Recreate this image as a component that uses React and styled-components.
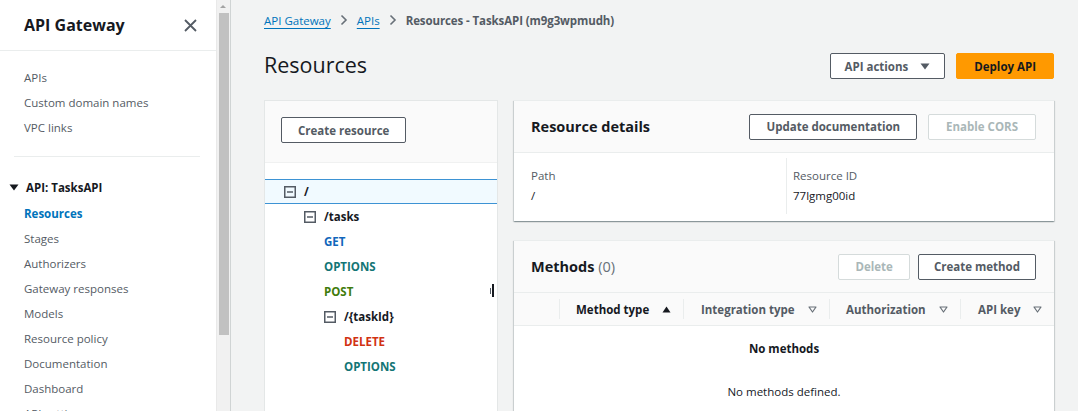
import React from "react";
import styled, { createGlobalStyle } from "styled-components";

const Global = createGlobalStyle`
  html, body { margin: 0; padding: 0; }
  body {
    font-family: "Open Sans", "Noto Sans", Arial, sans-serif;
    font-size: 11.5px;
    color: #16191f;
    background: #f2f3f3;
    overflow: hidden;
  }
  * { box-sizing: border-box; }
`;

const Shell = styled.div`
  display: flex;
  height: 411px;
  width: 1078px;
  overflow: hidden;
`;

/* ---------- Sidebar ---------- */
const SidebarFrame = styled.div`
  display: flex;
  flex: none;
  height: 411px;
  border-right: 1px solid #d0d4d4;
`;

const Sidebar = styled.nav`
  width: 216px;
  height: 411px;
  background: #fff;
  overflow: hidden;
`;

const ScrollTrack = styled.div`
  position: relative;
  width: 14px;
  height: 411px;
  background: #f1f1f1;
  border-left: 1px solid #e9e9e9;
`;

const ScrollArrow = styled.span`
  position: absolute;
  top: 5px;
  left: 3px;
  width: 0;
  height: 0;
  border-left: 3.5px solid transparent;
  border-right: 3.5px solid transparent;
  border-bottom: 3.5px solid #a3a3a3;
`;

const ScrollThumb = styled.div`
  position: absolute;
  top: 13px;
  left: 2px;
  width: 10px;
  height: 322px;
  background: #c1c1c1;
`;

const SideHeader = styled.div`
  height: 51px;
  padding: 0 19px 0 24px;
  display: flex;
  align-items: center;
  justify-content: space-between;
  border-bottom: 1px solid #eaeded;
`;

const SideTitle = styled.div`
  font-size: 16px;
  font-weight: 700;
  color: #16191f;
`;

const CloseBtn = styled.span`
  display: flex;
  color: #545b64;
`;

const NavGroup = styled.ul`
  list-style: none;
  margin: 0;
  padding: ${(p) => (p.$top ? "14px 0 16px" : "1px 0 0")};
`;

const NavItem = styled.li`
  height: 25px;
  line-height: 25px;
  padding-left: 24px;
  white-space: nowrap;
  color: ${(p) => (p.$active ? "#0073bb" : "#545b64")};
  font-weight: ${(p) => (p.$active ? 700 : 400)};
`;

const Divider = styled.hr`
  border: 0;
  border-top: 1px solid #eaeded;
  margin: 0 16px 18px 14px;
`;

const SectionTitle = styled.div`
  height: 25px;
  display: flex;
  align-items: center;
  gap: 7px;
  padding-left: 9px;
  font-weight: 700;
  color: #16191f;
`;

/* ---------- Main ---------- */
const Main = styled.main`
  flex: 1;
  padding: 11px 24px 0 33px;
  min-width: 0;
`;

const Crumbs = styled.div`
  display: flex;
  align-items: center;
  gap: 9px;
  height: 18px;
  white-space: nowrap;
`;

const CrumbLink = styled.a`
  color: #0073bb;
  text-decoration: underline;
  text-underline-offset: 3px;
`;

const CrumbCurrent = styled.span`
  color: #545b64;
  font-weight: 700;
  letter-spacing: -0.1px;
`;

const HeaderRow = styled.div`
  display: flex;
  align-items: center;
  justify-content: space-between;
  margin-top: 23px;
  height: 28px;
`;

const H1 = styled.h1`
  margin: 0 0 2px;
  font-size: 21.5px;
  font-weight: 400;
  line-height: 28px;
  color: #16191f;
`;

const Actions = styled.div`
  display: flex;
  align-items: center;
  gap: ${(p) => p.$gap || 11}px;
`;

const Button = styled.button`
  font-family: inherit;
  font-size: 11.5px;
  font-weight: 700;
  height: 26px;
  padding: 0 ${(p) => p.$px || 17}px;
  border-radius: 2px;
  display: inline-flex;
  align-items: center;
  gap: 12px;
  cursor: pointer;
  background: ${(p) => (p.$primary ? "#ff9900" : "#fff")};
  color: ${(p) => (p.$primary ? "#16191f" : p.disabled ? "#aab7b8" : "#545b64")};
  border: 1px solid ${(p) => (p.$primary ? "#ff9900" : p.disabled ? "#d5dbdb" : "#545b64")};
  white-space: nowrap;
`;

const Content = styled.div`
  display: grid;
  grid-template-columns: 234px 1fr;
  gap: 16px;
  margin-top: 20px;
`;

/* ---------- Tree panel ---------- */
const TreePanel = styled.section`
  position: relative;
  background: #fff;
  border: 1px solid #e4e7e7;
  height: 330px;
`;

const TreeTop = styled.div`
  background: #fafafa;
  border-bottom: 1px solid #f0f1f1;
  padding: 16px 16px 19px;
`;

const Tree = styled.ul`
  list-style: none;
  margin: 0;
  padding: 16px 0 0;
`;

const TreeRow = styled.li`
  height: 25px;
  display: flex;
  align-items: center;
  gap: 8px;
  padding-left: ${(p) => p.$indent}px;
  font-weight: 700;
  color: ${(p) => p.$color || "#16191f"};
  background: ${(p) => (p.$selected ? "#f1faff" : "transparent")};
  border-top: 1px solid ${(p) => (p.$selected ? "#3d93d4" : "transparent")};
  border-bottom: 1px solid ${(p) => (p.$selected ? "#3d93d4" : "transparent")};
`;

const Handle = styled.span`
  position: absolute;
  right: 3px;
  top: 183px;
  display: flex;
  align-items: center;
  gap: 1px;
  & > i { display: block; background: #16191f; width: 2px; }
  & > i:first-child { height: 6px; width: 1.5px; background: #545b64; }
  & > i:last-child { height: 13px; }
`;

/* ---------- Cards ---------- */
const Column = styled.div`
  display: flex;
  flex-direction: column;
  gap: 19px;
`;

const Card = styled.section`
  background: #fff;
  box-shadow: 0 1px 1px 0 rgba(0, 28, 36, 0.25), 1px 1px 1px 0 rgba(0, 28, 36, 0.12),
    -1px 1px 1px 0 rgba(0, 28, 36, 0.12);
  border-top: 1px solid #eaeded;
  ${(p) => (p.$grow ? "height: 200px;" : "")}
`;

const CardHeader = styled.div`
  height: 52px;
  padding: 0 18px 0 17px;
  display: flex;
  align-items: center;
  justify-content: space-between;
  background: #fafafa;
  border-bottom: 1px solid #eaeded;
`;

const CardTitle = styled.h2`
  margin: 0;
  font-size: 14.5px;
  font-weight: 700;
  color: #16191f;
  & > span { font-weight: 400; color: #687078; }
`;

const Details = styled.div`
  display: grid;
  grid-template-columns: 272px 1fr;
  padding: 5px 0 7px;
`;

const Field = styled.div`
  padding: 8px 17px 8px ${(p) => (p.$first ? 17 : 6)}px;
  border-left: ${(p) => (p.$first ? "none" : "1px solid #eaeded")};
  line-height: 20px;
`;

const Label = styled.div`
  color: #545b64;
`;

const Value = styled.div`
  color: #16191f;
`;

const TableHead = styled.div`
  display: grid;
  grid-template-columns: 46px 124px 146px 131px 1fr;
  height: 33px;
  align-items: center;
  background: #fafafa;
  border-bottom: 1px solid #eaeded;
`;

const Th = styled.div`
  height: 20px;
  display: flex;
  align-items: center;
  justify-content: space-between;
  padding: 0 ${(p) => p.$pr || 12}px 0 ${(p) => p.$pl || 17}px;
  border-right: ${(p) => (p.$last ? "none" : "1px solid #eaeded")};
  font-weight: 700;
  color: ${(p) => (p.$sorted ? "#16191f" : "#545b64")};
  white-space: nowrap;
`;

const Empty = styled.div`
  text-align: center;
  padding-top: 14px;
  color: #16191f;
`;

const EmptyTitle = styled.div`
  font-weight: 700;
  line-height: 18px;
`;

const EmptyText = styled.div`
  margin-top: 25px;
  line-height: 18px;
`;

/* ---------- Icons ---------- */
const Chevron = () => (
  <svg width="8" height="12" viewBox="0 0 8 12">
    <path d="M1.5 1.5 6 6l-4.5 4.5" fill="none" stroke="#687078" strokeWidth="1.6" />
  </svg>
);

const CloseIcon = () => (
  <svg width="13" height="13" viewBox="0 0 13 13">
    <path d="M1 1l11 11M12 1L1 12" stroke="#545b64" strokeWidth="1.8" />
  </svg>
);

const CaretDown = ({ color = "#16191f" }) => (
  <svg width="10" height="7" viewBox="0 0 10 7">
    <path d="M0.5 0.5h9L5 6.5z" fill={color} />
  </svg>
);

const Minus = () => (
  <svg width="12" height="12" viewBox="0 0 12 12" style={{ flex: "none" }}>
    <rect x="0.75" y="0.75" width="10.5" height="10.5" fill="none" stroke="#545b64" strokeWidth="1.5" />
    <path d="M3 6h6" stroke="#545b64" strokeWidth="1.5" />
  </svg>
);

const SortUp = () => (
  <svg width="9" height="7" viewBox="0 0 9 7">
    <path d="M4.5 0.5 8.5 6.5h-8z" fill="#16191f" />
  </svg>
);

const SortNone = () => (
  <svg width="9" height="7" viewBox="0 0 9 7">
    <path d="M1 1h7L4.5 6z" fill="none" stroke="#687078" strokeWidth="1.2" strokeLinejoin="round" />
  </svg>
);

const COLORS = { GET: "#1166bb", OPTIONS: "#137575", POST: "#3f7c0c", DELETE: "#d13212" };

const topNav = ["APIs", "Custom domain names", "VPC links"];
const apiNav = [
  "Resources",
  "Stages",
  "Authorizers",
  "Gateway responses",
  "Models",
  "Resource policy",
  "Documentation",
  "Dashboard",
  "API settings",
];

const tree = [
  { kind: "res", label: "/", level: 0, selected: true },
  { kind: "res", label: "/tasks", level: 1 },
  { kind: "m", label: "GET", level: 1 },
  { kind: "m", label: "OPTIONS", level: 1 },
  { kind: "m", label: "POST", level: 1 },
  { kind: "res", label: "/{taskId}", level: 2 },
  { kind: "m", label: "DELETE", level: 2 },
  { kind: "m", label: "OPTIONS", level: 2 },
];

export default function App() {
  return (
    <>
      <Global />
      <Shell>
        <SidebarFrame>
          <Sidebar>
            <SideHeader>
              <SideTitle>API Gateway</SideTitle>
              <CloseBtn>
                <CloseIcon />
              </CloseBtn>
            </SideHeader>
            <NavGroup $top>
              {topNav.map((t) => (
                <NavItem key={t}>{t}</NavItem>
              ))}
            </NavGroup>
            <Divider />
            <SectionTitle>
              <CaretDown color="#16191f" />
              API: TasksAPI
            </SectionTitle>
            <NavGroup>
              {apiNav.map((t) => (
                <NavItem key={t} $active={t === "Resources"}>
                  {t}
                </NavItem>
              ))}
            </NavGroup>
          </Sidebar>
          <ScrollTrack>
            <ScrollArrow />
            <ScrollThumb />
          </ScrollTrack>
        </SidebarFrame>

        <Main>
          <Crumbs>
            <CrumbLink>API Gateway</CrumbLink>
            <Chevron />
            <CrumbLink>APIs</CrumbLink>
            <Chevron />
            <CrumbCurrent>Resources - TasksAPI (m9g3wpmudh)</CrumbCurrent>
          </Crumbs>

          <HeaderRow>
            <H1>Resources</H1>
            <Actions>
              <Button $px={14}>
                API actions <CaretDown color="#545b64" />
              </Button>
              <Button $primary $px={17}>
                Deploy API
              </Button>
            </Actions>
          </HeaderRow>

          <Content>
            <TreePanel>
              <TreeTop>
                <Button $px={16}>Create resource</Button>
              </TreeTop>
              <Tree>
                {tree.map((n, i) =>
                  n.kind === "res" ? (
                    <TreeRow key={i} $indent={19 + n.level * 20} $selected={n.selected}>
                      <Minus />
                      {n.label}
                    </TreeRow>
                  ) : (
                    <TreeRow key={i} $indent={39 + n.level * 20} $color={COLORS[n.label]}>
                      {n.label}
                    </TreeRow>
                  )
                )}
              </Tree>
              <Handle>
                <i />
                <i />
              </Handle>
            </TreePanel>

            <Column>
              <Card>
                <CardHeader>
                  <CardTitle>Resource details</CardTitle>
                  <Actions $gap={11}>
                    <Button $px={16}>Update documentation</Button>
                    <Button disabled $px={17}>
                      Enable CORS
                    </Button>
                  </Actions>
                </CardHeader>
                <Details>
                  <Field $first>
                    <Label>Path</Label>
                    <Value>/</Value>
                  </Field>
                  <Field>
                    <Label>Resource ID</Label>
                    <Value>77lgmg00id</Value>
                  </Field>
                </Details>
              </Card>

              <Card $grow>
                <CardHeader>
                  <CardTitle>
                    Methods <span>(0)</span>
                  </CardTitle>
                  <Actions $gap={8}>
                    <Button disabled $px={16}>
                      Delete
                    </Button>
                    <Button $px={15}>Create method</Button>
                  </Actions>
                </CardHeader>
                <TableHead>
                  <Th />
                  <Th $sorted $pl={16}>
                    Method type <SortUp />
                  </Th>
                  <Th>
                    Integration type <SortNone />
                  </Th>
                  <Th $pl={16}>
                    Authorization <SortNone />
                  </Th>
                  <Th $last $pl={17}>
                    API key <SortNone />
                  </Th>
                </TableHead>
                <Empty>
                  <EmptyTitle>No methods</EmptyTitle>
                  <EmptyText>No methods defined.</EmptyText>
                </Empty>
              </Card>
            </Column>
          </Content>
        </Main>
      </Shell>
    </>
  );
}
